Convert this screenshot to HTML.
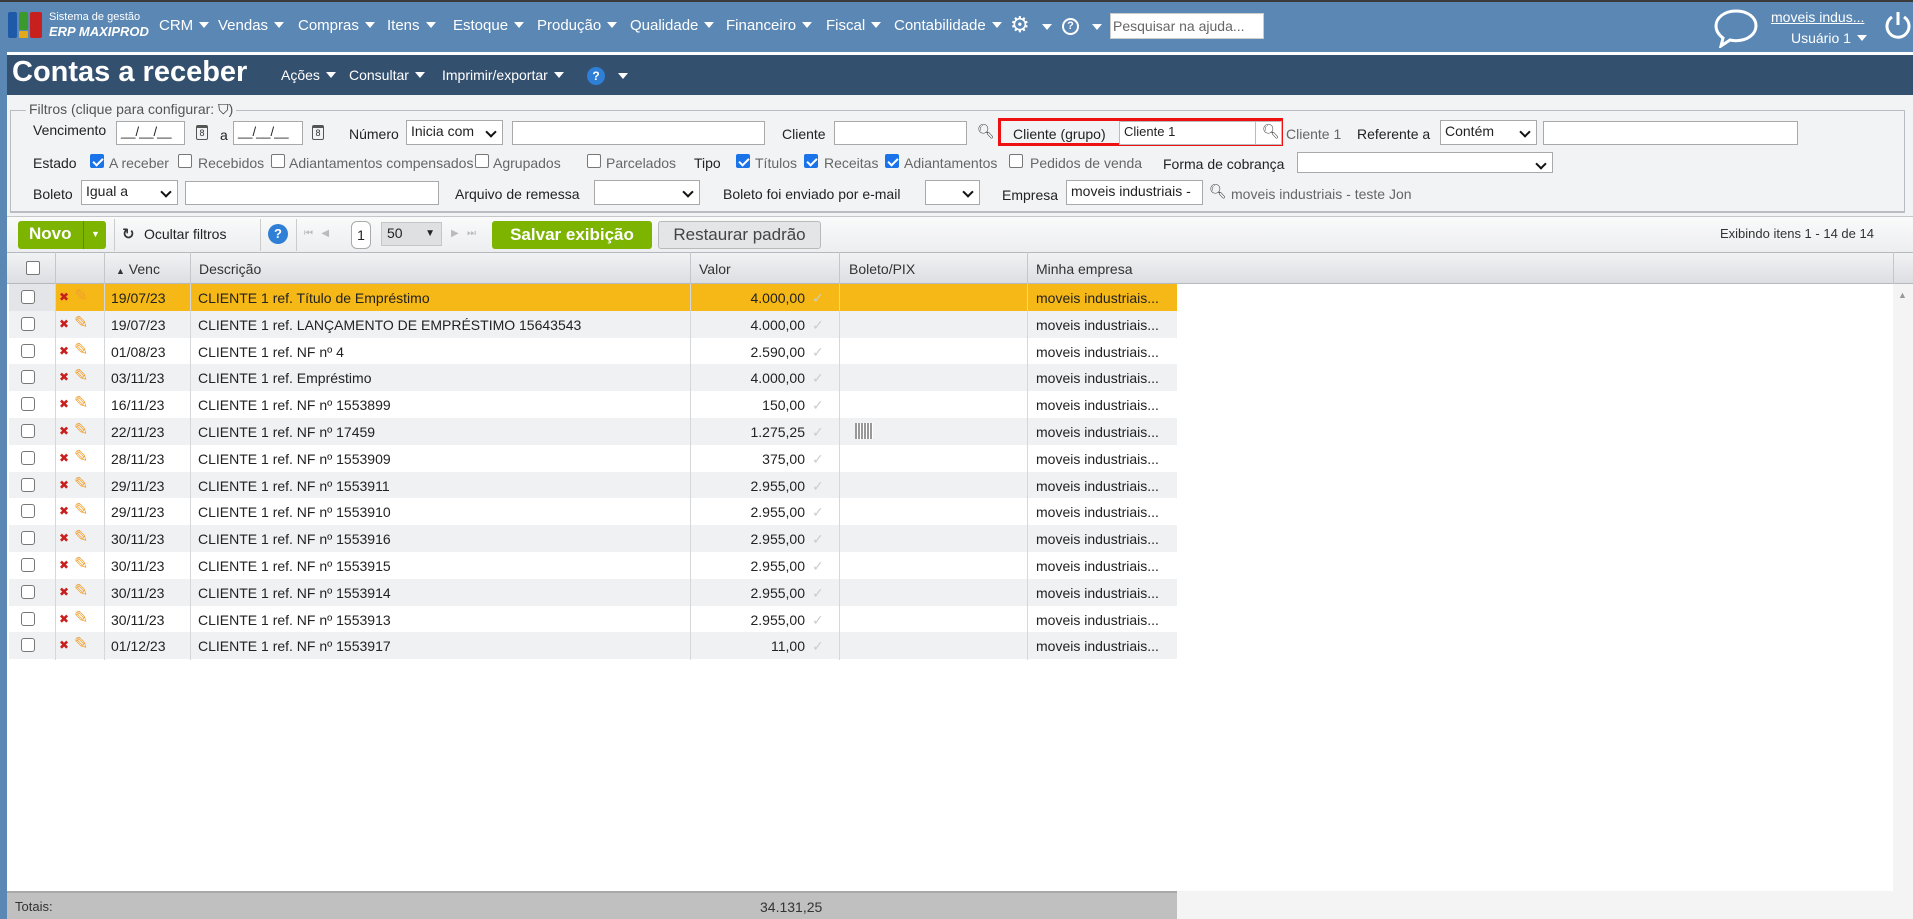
<!DOCTYPE html>
<html><head><meta charset="utf-8"><style>
*{box-sizing:border-box;margin:0;padding:0}
body{width:1913px;height:919px;position:relative;overflow:hidden;background:#5b87b4;font-family:"Liberation Sans","DejaVu Sans",sans-serif;font-size:14px;color:#222}
.a{position:absolute;white-space:nowrap}
.nav{color:#fff;font-size:15px;top:17px}
.tri{display:inline-block;width:0;height:0;border-left:5px solid transparent;border-right:5px solid transparent;border-top:6px solid #fff;margin-left:6px;vertical-align:2px}
.in{position:absolute;background:#fff;border:1px solid #a9a9a9;height:24px;font-size:13px;padding:2px 4px}
.sel:after{content:"";position:absolute;right:7px;top:7px;width:6px;height:6px;border-right:2px solid #111;border-bottom:2px solid #111;transform:rotate(45deg)}
.cb{position:absolute;width:14px;height:14px;border:1px solid #777;border-radius:2px;background:#fff}
.cb.on{background:#1a73e8;border-color:#1a73e8}
.cb.on:after{content:"";position:absolute;left:4px;top:1px;width:4px;height:8px;border-right:2px solid #fff;border-bottom:2px solid #fff;transform:rotate(45deg)}
.lbl{position:absolute;font-size:14px;color:#222;white-space:nowrap}
.g{color:#666}
.row{position:absolute;left:9px;width:1168px;height:26.8px;font-size:14px}
.row div{position:absolute;top:6px;white-space:nowrap}
.vl{position:absolute;width:1px;background:#d6d7da}
.cal{position:absolute;width:12px;height:15px;border:1px solid #555;border-top-width:3px;border-radius:2px;font-size:9px;text-align:center;line-height:11px;color:#333}
</style></head><body>
<div class="a" style="left:0;top:0;width:1913px;height:2px;background:#3a3a3a"></div>
<div class="a" style="left:8px;top:12px;width:9px;height:26px;background:#1f5aa8;border-radius:2px"></div>
<div class="a" style="left:19px;top:12px;width:9px;height:18px;background:#3c9a2d;border-radius:2px"></div>
<div class="a" style="left:19px;top:31px;width:9px;height:7px;background:#e3a91c;border-radius:1px"></div>
<div class="a" style="left:30px;top:12px;width:12px;height:26px;background:#c8201f;border-radius:2px"></div>
<div class="a" style="left:49px;top:11px;color:#fff;font-size:11px">Sistema de gestão</div>
<div class="a" style="left:49px;top:24px;color:#fff;font-size:13px;font-style:italic;font-weight:bold">ERP MAXIPROD</div>
<div class="a nav" style="left:159px">CRM<span class="tri"></span></div>
<div class="a nav" style="left:218px">Vendas<span class="tri"></span></div>
<div class="a nav" style="left:298px">Compras<span class="tri"></span></div>
<div class="a nav" style="left:387px">Itens<span class="tri"></span></div>
<div class="a nav" style="left:453px">Estoque<span class="tri"></span></div>
<div class="a nav" style="left:537px">Produção<span class="tri"></span></div>
<div class="a nav" style="left:630px">Qualidade<span class="tri"></span></div>
<div class="a nav" style="left:726px">Financeiro<span class="tri"></span></div>
<div class="a nav" style="left:826px">Fiscal<span class="tri"></span></div>
<div class="a nav" style="left:894px">Contabilidade<span class="tri"></span></div>
<div class="a nav" style="left:1010px;top:12px;font-size:22px">⚙</div>
<div class="a" style="left:1042px;top:19px"><span class="tri" style="margin:0"></span></div>
<div class="a" style="left:1062px;top:18px;width:17px;height:17px;border:2px solid #fff;border-radius:50%;color:#fff;font-size:11px;text-align:center;line-height:13px;font-weight:bold">?</div>
<div class="a" style="left:1092px;top:19px"><span class="tri" style="margin:0"></span></div>
<div class="a" style="left:1110px;top:13px;width:154px;height:26px;background:#fff;border:1px solid #ccc;color:#666;font-size:14px;padding:4px 2px">Pesquisar na ajuda...</div>
<svg class="a" style="left:1712px;top:8px" width="48" height="40" viewBox="0 0 48 40"><path d="M24 3C12 3 4 10 4 18c0 5 3 9 7 12l-2 8 9-6c2 .5 4 .7 6 .7 12 0 20-7 20-15S36 3 24 3z" fill="none" stroke="#fff" stroke-width="3"/></svg>
<div class="a" style="left:1771px;top:9px;color:#fff;font-size:14px;text-decoration:underline">moveis indus...</div>
<div class="a" style="left:1791px;top:30px;color:#fff;font-size:14px">Usuário 1<span class="tri"></span></div>
<svg class="a" style="left:1884px;top:9px" width="28" height="32" viewBox="0 0 28 32"><path d="M8 8A11 11 0 1 0 20 8" fill="none" stroke="#fff" stroke-width="3"/><path d="M14 3v13" stroke="#fff" stroke-width="3"/></svg>
<div class="a" style="left:7px;top:52px;width:1906px;height:867px;background:#fff"></div>
<div class="a" style="left:7px;top:55px;width:1906px;height:40px;background:#34506f"></div>
<div class="a" style="left:12px;top:56px;color:#fff;font-size:29px;font-weight:bold">Contas a receber</div>
<div class="a" style="left:281px;top:67px;color:#fff;font-size:14px">Ações<span class="tri"></span></div>
<div class="a" style="left:349px;top:67px;color:#fff;font-size:14px">Consultar<span class="tri"></span></div>
<div class="a" style="left:442px;top:67px;color:#fff;font-size:14px">Imprimir/exportar<span class="tri"></span></div>
<div class="a" style="left:587px;top:67px;width:18px;height:18px;border-radius:50%;background:#2f7fd6;color:#fff;font-size:12px;font-weight:bold;text-align:center;line-height:18px">?</div>
<div class="a" style="left:618px;top:68px"><span class="tri" style="margin:0"></span></div>
<div class="a" style="left:7px;top:95px;width:1906px;height:123px;background:#f2f3f5"></div>
<div class="a" style="left:10px;top:110px;width:1895px;height:103px;border:1px solid #b9bcc2;border-bottom:2px solid #b9bcc2"></div>
<div class="a" style="left:26px;top:101px;background:#f2f3f5;padding:0 3px;color:#555;font-size:14px">Filtros (clique para configurar: <span style="color:#222">⛉</span>)</div>
<div class="lbl" style="left:33px;top:122px">Vencimento</div>
<div class="in" style="left:116px;top:121px;width:69px">__/__/__</div>
<div class="cal" style="left:196px;top:125px">8</div>
<div class="lbl" style="left:220px;top:127px">a</div>
<div class="in" style="left:233px;top:121px;width:70px">__/__/__</div>
<div class="cal" style="left:312px;top:125px">8</div>
<div class="lbl" style="left:349px;top:126px">Número</div>
<div class="in sel" style="left:406px;top:120px;width:97px;height:25px;font-size:14px">Inicia com</div>
<div class="in" style="left:512px;top:121px;width:253px"></div>
<div class="lbl" style="left:782px;top:126px">Cliente</div>
<div class="in" style="left:834px;top:121px;width:133px"></div>
<div class="lbl" style="left:977px;top:123px;color:#444">🔍︎</div>
<div class="a" style="left:998px;top:118px;width:285px;height:28px;border:3px solid #ee1111"></div>
<div class="lbl" style="left:1013px;top:126px">Cliente (grupo)</div>
<div class="in" style="left:1119px;top:121px;width:163px;border-color:#bbb">Cliente 1</div>
<div class="a" style="left:1255px;top:121px;width:1px;height:24px;background:#bbb"></div>
<div class="lbl" style="left:1262px;top:123px;color:#444">🔍︎</div>
<div class="lbl g" style="left:1286px;top:126px">Cliente 1</div>
<div class="lbl" style="left:1357px;top:126px">Referente a</div>
<div class="in sel" style="left:1440px;top:120px;width:97px;height:25px;font-size:14px">Contém</div>
<div class="in" style="left:1543px;top:121px;width:255px"></div>
<div class="lbl" style="left:33px;top:155px">Estado</div>
<div class="cb on" style="left:90px;top:154px"></div><div class="lbl g" style="left:109px;top:155px">A receber</div>
<div class="cb" style="left:178px;top:154px"></div><div class="lbl g" style="left:198px;top:155px">Recebidos</div>
<div class="cb" style="left:271px;top:154px"></div><div class="lbl g" style="left:289px;top:155px">Adiantamentos compensados</div>
<div class="cb" style="left:475px;top:154px"></div><div class="lbl g" style="left:493px;top:155px">Agrupados</div>
<div class="cb" style="left:587px;top:154px"></div><div class="lbl g" style="left:606px;top:155px">Parcelados</div>
<div class="lbl" style="left:694px;top:155px">Tipo</div>
<div class="cb on" style="left:736px;top:154px"></div><div class="lbl g" style="left:755px;top:155px">Títulos</div>
<div class="cb on" style="left:804px;top:154px"></div><div class="lbl g" style="left:824px;top:155px">Receitas</div>
<div class="cb on" style="left:885px;top:154px"></div><div class="lbl g" style="left:904px;top:155px">Adiantamentos</div>
<div class="cb" style="left:1009px;top:154px"></div><div class="lbl g" style="left:1030px;top:155px">Pedidos de venda</div>
<div class="lbl" style="left:1163px;top:156px">Forma de cobrança</div>
<div class="in sel" style="left:1297px;top:152px;width:256px;height:21px"></div>
<div class="lbl" style="left:33px;top:186px">Boleto</div>
<div class="in sel" style="left:81px;top:180px;width:97px;height:25px;font-size:14px">Igual a</div>
<div class="in" style="left:185px;top:181px;width:254px"></div>
<div class="lbl" style="left:455px;top:186px">Arquivo de remessa</div>
<div class="in sel" style="left:594px;top:180px;width:106px;height:25px"></div>
<div class="lbl" style="left:723px;top:186px">Boleto foi enviado por e-mail</div>
<div class="in sel" style="left:925px;top:180px;width:55px;height:25px"></div>
<div class="lbl" style="left:1002px;top:187px">Empresa</div>
<div class="in" style="left:1066px;top:180px;width:137px;height:25px;font-size:14px">moveis industriais -</div>
<div class="lbl" style="left:1209px;top:183px;color:#444">🔍︎</div>
<div class="lbl g" style="left:1231px;top:186px">moveis industriais - teste Jon</div>
<div class="a" style="left:7px;top:216px;width:1906px;height:36px;background:linear-gradient(#fafafa,#eceef0);border-top:1px solid #c4c6ca"></div>
<div class="a" style="left:18px;top:221px;width:88px;height:28px;background:#7cb400;border-radius:3px"></div>
<div class="a" style="left:29px;top:224px;color:#fff;font-size:17px;font-weight:bold">Novo</div>
<div class="a" style="left:83px;top:221px;width:1px;height:28px;background:#5e8c00"></div>
<div class="a" style="left:91px;top:229px;color:#fff;font-size:9px">▼</div>
<div class="a" style="left:114px;top:219px;width:1px;height:32px;background:#ccc"></div>
<div class="a" style="left:122px;top:225px;font-size:15px;color:#333;font-weight:bold">↻</div>
<div class="a" style="left:144px;top:226px;font-size:14px">Ocultar filtros</div>
<div class="a" style="left:260px;top:219px;width:1px;height:32px;background:#ccc"></div>
<div class="a" style="left:268px;top:224px;width:20px;height:20px;border-radius:50%;background:#2f7fd6;color:#fff;font-size:13px;font-weight:bold;text-align:center;line-height:20px">?</div>
<div class="a" style="left:296px;top:219px;width:1px;height:32px;background:#ccc"></div>
<div class="a" style="left:304px;top:228px;color:#bbb;font-size:10px">⏮&nbsp;&nbsp;&nbsp;◀</div>
<div class="a" style="left:351px;top:221px;width:20px;height:28px;border:1px solid #aaa;border-radius:6px;background:#fff;font-size:14px;text-align:center;line-height:26px">1</div>
<div class="a" style="left:381px;top:222px;width:61px;height:24px;background:#dfe0e2;border:1px solid #c6c6c6;font-size:14px;padding:2px 5px">50<span style="position:absolute;right:6px;top:5px;font-size:10px">▼</span></div>
<div class="a" style="left:451px;top:228px;color:#bbb;font-size:10px">▶&nbsp;&nbsp;&nbsp;⏭</div>
<div class="a" style="left:492px;top:221px;width:160px;height:28px;background:#7cb400;border-radius:3px;color:#fff;font-size:17px;font-weight:bold;text-align:center;line-height:28px">Salvar exibição</div>
<div class="a" style="left:658px;top:221px;width:163px;height:28px;background:#e4e5e7;border:1px solid #b9b9b9;border-radius:3px;color:#444;font-size:17px;text-align:center;line-height:26px">Restaurar padrão</div>
<div class="a" style="left:1720px;top:226px;color:#333;font-size:13px">Exibindo itens 1 - 14 de 14</div>
<div class="a" style="left:7px;top:252px;width:1906px;height:32px;background:linear-gradient(#f1f2f4,#dcdee2);border-top:1px solid #b5b8bd;border-bottom:1px solid #b5b8bd"></div>
<div class="cb" style="left:26px;top:261px"></div>
<div class="a" style="left:116px;top:261px;font-size:14px;color:#333"><span style="font-size:9px">▲</span> Venc</div>
<div class="a" style="left:199px;top:261px;font-size:14px;color:#333">Descrição</div>
<div class="a" style="left:699px;top:261px;font-size:14px;color:#333">Valor</div>
<div class="a" style="left:849px;top:261px;font-size:14px;color:#333">Boleto/PIX</div>
<div class="a" style="left:1036px;top:261px;font-size:14px;color:#333">Minha empresa</div>
<div class="a" style="left:1893px;top:284px;width:20px;height:608px;background:#f4f4f4"></div>
<div class="a" style="left:1898px;top:290px;color:#999;font-size:9px">▲</div>
<div id="rows"></div>
<div class="a" style="left:7px;top:891px;width:1170px;height:28px;background:#c0c0c0;border-top:2px solid #a8a8a8"></div>
<div class="a" style="left:1177px;top:891px;width:736px;height:28px;background:#f4f4f4"></div>
<div class="a" style="left:15px;top:899px;color:#333;font-size:13px">Totais:</div>
<div class="a" style="left:760px;top:899px;color:#333;font-size:14px">34.131,25</div>
<script>
var d=[["19/07/23","CLIENTE 1 ref. Título de Empréstimo","4.000,00"],["19/07/23","CLIENTE 1 ref. LANÇAMENTO DE EMPRÉSTIMO 15643543","4.000,00"],["01/08/23","CLIENTE 1 ref. NF nº 4","2.590,00"],["03/11/23","CLIENTE 1 ref. Empréstimo","4.000,00"],["16/11/23","CLIENTE 1 ref. NF nº 1553899","150,00"],["22/11/23","CLIENTE 1 ref. NF nº 17459","1.275,25"],["28/11/23","CLIENTE 1 ref. NF nº 1553909","375,00"],["29/11/23","CLIENTE 1 ref. NF nº 1553911","2.955,00"],["29/11/23","CLIENTE 1 ref. NF nº 1553910","2.955,00"],["30/11/23","CLIENTE 1 ref. NF nº 1553916","2.955,00"],["30/11/23","CLIENTE 1 ref. NF nº 1553915","2.955,00"],["30/11/23","CLIENTE 1 ref. NF nº 1553914","2.955,00"],["30/11/23","CLIENTE 1 ref. NF nº 1553913","2.955,00"],["01/12/23","CLIENTE 1 ref. NF nº 1553917","11,00"]];
var h="";
for(var i=0;i<d.length;i++){var y=284+i*26.8;var bg=i==0?"#f5b816":(i%2?"#f0f1f3":"#fff");
h+='<div class="row" style="top:'+y+'px;background:'+bg+'">'+
'<div style="left:0;top:0;width:46px;height:26.8px;background:'+(i==0?"#e4e5e8":bg)+'"></div>'+
'<span class="cb" style="left:12px;top:6px;border-radius:3px"></span>'+
'<div style="left:50px;top:6px;color:#c8201f;font-size:12px;font-weight:bold">✖</div>'+
'<div style="left:65px;top:2px;color:#f0a030;font-size:17px">✎</div>'+
'<div style="left:102px">'+d[i][0]+'</div>'+
'<div style="left:189px">'+d[i][1]+'</div>'+
'<div style="right:372px">'+d[i][2]+'</div>'+
'<div style="left:803px;color:#ccc">✓</div>'+
(i==5?'<div style="left:846px;top:5px;width:18px;height:16px;background:repeating-linear-gradient(90deg,#999 0 2px,#fff 2px 3px)"></div>':'')+
'<div style="left:1027px">moveis industriais...</div></div>';}
var xs=[55,104,190,690,839,1027];
for(var j=0;j<xs.length;j++){h+='<div class="vl" style="left:'+xs[j]+'px;top:252px;height:32px;background:#c4c6ca"></div><div class="vl" style="left:'+xs[j]+'px;top:284px;height:376px"></div><div class="vl" style="left:'+xs[j]+'px;top:893px;height:26px;background:#aaa"></div>';}
h+='<div class="vl" style="left:1893px;top:252px;height:32px;background:#c4c6ca"></div>';
document.getElementById("rows").innerHTML=h;
</script>
</body></html>
